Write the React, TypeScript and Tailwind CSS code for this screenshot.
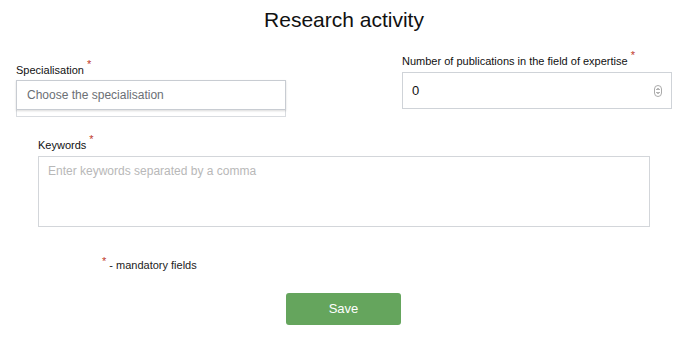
import { useState } from 'react';

const Star = () => <span className="text-[#c0392b] text-[11px] ml-[3px] relative -top-[6px]">*</span>;

const App = () => {
  const [count, setCount] = useState('0');

  return (
    <div className="w-[688px] h-[341px] bg-white font-['Liberation_Sans',Arial,sans-serif] text-[#111]">
      <h1 className="text-center text-[21px] leading-[24px] pt-[8px]">Research activity</h1>

      <div className="flex mt-[23px]">
        {/* Specialisation */}
        <div className="ml-[16px] w-[270px] pt-[9px]">
          <label className="block text-[11px] leading-[13px] h-[13px]">
            Specialisation<Star />
          </label>
          <div className="mt-[3px] border border-[#d9dce0] h-[37px]">
            <div className="h-[30px] -m-px border border-[#c8ccd2] shadow-[0_1px_2px_rgba(0,0,0,0.15)] flex items-center px-[10px] text-[12px] text-[#6b6f75]">
              Choose the specialisation
            </div>
          </div>
        </div>

        {/* Publications */}
        <div className="ml-[116px] w-[270px]">
          <label className="block text-[11px] leading-[13px] h-[13px]">
            Number of publications in the field of expertise<Star />
          </label>
          <div className="mt-[4px] border border-[#cfd3d8] h-[37px] flex items-center pl-[9px] pr-[9px]">
            <input
              value={count}
              onChange={(e) => setCount(e.target.value)}
              className="flex-1 outline-none text-[13px] text-[#111] bg-transparent"
            />
            <svg width="8" height="12" viewBox="0 0 8 12">
              <rect x="0.5" y="0.5" width="7" height="11" rx="3.5" fill="none" stroke="#aaa" />
              <path d="M2.5 5 L4 3.5 L5.5 5" fill="none" stroke="#555" strokeWidth="0.9" />
              <path d="M2.5 7 L4 8.5 L5.5 7" fill="none" stroke="#555" strokeWidth="0.9" />
            </svg>
          </div>
        </div>
      </div>

      {/* Keywords */}
      <div className="ml-[38px] w-[612px] mt-[22px]">
        <label className="block text-[11px] leading-[13px] h-[13px]">
          Keywords<Star />
        </label>
        <textarea
          placeholder="Enter keywords separated by a comma"
          className="mt-[4px] block w-full h-[71px] border border-[#d3d6da] px-[9px] pt-[5px] pb-[6px] text-[12px] resize-none outline-none placeholder:text-[#b8b8b8]"
        />
      </div>

      <div className="ml-[102px] mt-[32px] text-[11px] leading-[13px] flex items-start">
        <span className="text-[#c0392b] text-[11px] relative -top-[4px] mr-[3px]">*</span>
        <span className="text-[#222]">- mandatory fields</span>
      </div>

      <div className="flex justify-center mt-[21px]">
        <button className="w-[115px] h-[32px] rounded-[3px] bg-[#65a55d] text-white text-[13px] ml-[-1px]">
          Save
        </button>
      </div>
    </div>
  );
};

export default App;
